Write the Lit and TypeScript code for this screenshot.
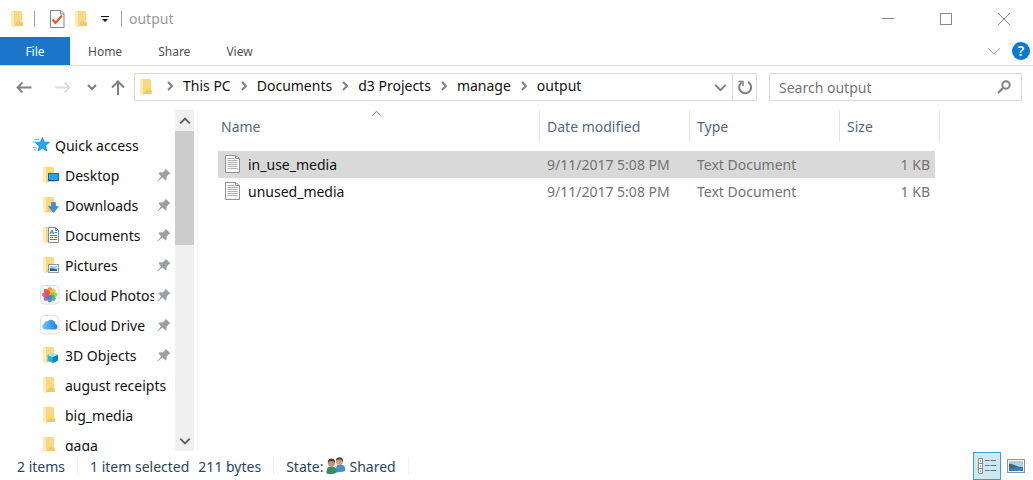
import { LitElement, html, svg, css, nothing, type TemplateResult } from "lit";
import { customElement, property, state } from "lit/decorators.js";
import { classMap } from "lit/directives/class-map.js";

type Overlay = "none" | "desktop" | "download" | "document" | "picture" | "cube";

interface Place {
  label: string;
  icon: Overlay | "photos" | "drive";
  pinned: boolean;
}

interface FileRow {
  name: string;
  modified: string;
  type: string;
  size: string;
}

const PLACES: Place[] = [
  { label: "Desktop", icon: "desktop", pinned: true },
  { label: "Downloads", icon: "download", pinned: true },
  { label: "Documents", icon: "document", pinned: true },
  { label: "Pictures", icon: "picture", pinned: true },
  { label: "iCloud Photos", icon: "photos", pinned: true },
  { label: "iCloud Drive", icon: "drive", pinned: true },
  { label: "3D Objects", icon: "cube", pinned: true },
  { label: "august receipts", icon: "none", pinned: false },
  { label: "big_media", icon: "none", pinned: false },
  { label: "gaga", icon: "none", pinned: false },
];

const FILES: FileRow[] = [
  { name: "in_use_media", modified: "9/11/2017 5:08 PM", type: "Text Document", size: "1 KB" },
  { name: "unused_media", modified: "9/11/2017 5:08 PM", type: "Text Document", size: "1 KB" },
];

const CRUMBS = ["This PC", "Documents", "d3 Projects", "manage", "output"];

const overlays: Record<Overlay, TemplateResult | typeof nothing> = {
  none: nothing,
  desktop: svg`<rect x="8.5" y="8.5" width="10" height="7" fill="#1ba5f3" stroke="#14699f"/><path d="M9 15.5h9" stroke="#0d3d66" stroke-dasharray="2 1"/>`,
  download: svg`<path d="M11.500 7.500h4v4h3L13.500 17.500 8.500 11.500h3z" fill="#3f8fd6" stroke="#2f77b8" stroke-width=".6"/>`,
  document: svg`<path d="M8.500 2.500h7l3 3v12h-10z" fill="#fff" stroke="#7d8b99"/><path d="M15.500 2.500v3h3" fill="none" stroke="#7d8b99"/><path d="M10 9l2-4 1.500 4M10.500 8h3M14.500 7.500h2.500M10 10.500h7M10 12.500h3M14.500 12.500h2.500M10 14.500h7" fill="none" stroke="#2b87cf"/>`,
  picture: svg`<rect x="8.500" y="9.500" width="10" height="8" fill="#fff" stroke="#8f99a3"/><rect x="10" y="11" width="7" height="5" fill="#9fd2f2"/><path d="M10 13l3 .5 4 1V16h-7z" fill="#28638e"/>`,
  cube: svg`<path d="M12.500 8l5.500 2v5.500L12.500 18 7.500 15.500V10z" fill="#1fb5d9"/><path d="M12.500 8l5.500 2-5.500 2.300L7.500 10z" fill="#9beaf7"/><path d="M12.500 12.300L18 10v5.500L12.500 18z" fill="#0b87b5"/>`,
};

const folder = (overlay: Overlay = "none") => html`
  <svg class="icon" width="20" height="20" viewBox="0 0 20 20" aria-hidden="true">
    <path d="M4 2h9l1 1v9.500l1 1V17H5z" fill="#f9da80" />
    <path d="M10 12l4.500 1.500V17H6z" fill="#f2c862" />
    <path d="M3 2l3.500 1.500V18.500L3 17z" fill="#fdecb5" />
    <path d="M6.500 3.500V18" stroke="#f0cf7c" stroke-width=".6" />
    ${overlays[overlay]}
  </svg>
`;

const PETALS = ["#f7941e", "#f4c51c", "#8fc63f", "#3fae77", "#3d86c6", "#8560a8", "#c94f8c", "#ea4b3b"];

const photos = () => html`
  <svg class="icon" width="20" height="20" viewBox="0 0 20 20" aria-hidden="true">
    <rect x=".5" y=".5" width="18.500" height="18.500" rx="4" fill="#fdfdfd" stroke="#dcdcdc" />
    ${PETALS.map(
      (color, i) =>
        svg`<ellipse cx="9.750" cy="5.700" rx="2.400" ry="3.600" fill=${color} fill-opacity=".88" transform="rotate(${i * 45} 9.750 9.750)"/>`,
    )}
  </svg>
`;

const drive = () => html`
  <svg class="icon" width="20" height="20" viewBox="0 0 20 20" aria-hidden="true">
    <defs>
      <linearGradient id="cloud" x1="0" x2="1"><stop stop-color="#6ec3fb" /><stop offset="1" stop-color="#1f7df0" /></linearGradient>
    </defs>
    <rect x=".5" y=".5" width="18.500" height="18.500" rx="4" fill="#fdfdfd" stroke="#dfdfdf" />
    <path d="M4.800 14.500a3 3 0 0 1-.6-5.800 2.700 2.700 0 0 1 3.300-2.200 4.300 4.300 0 0 1 7.700 2.300 2.900 2.900 0 0 1-.2 5.700z" fill="url(#cloud)" />
  </svg>
`;

const star = () => html`
  <svg class="icon" width="20" height="20" viewBox="0 0 20 20" aria-hidden="true">
    <path d="M11.500 2.500l1.800 4.700 5.200.1-4.200 3.300 1.700 5.400-4.700-2.900-4.300 2.900 1.200-5.100-3.900-3.400 5.100-.3z" fill="#29a8ef" stroke="#1583cf" stroke-width=".8" />
    <path d="M3.500 4.500h5M1.500 7h3M2 12.500h3.500M3 15h2.500" stroke="#5cb9ef" />
  </svg>
`;

const pin = () => html`
  <svg class="pin" width="14" height="14" viewBox="0 0 14 14" aria-hidden="true">
    <path d="M8.500.5l5 5-1.500.5-2.500 2.700.2 2.600-1.200 1.200-3-3L1 13.300l-.5-.5L4.300 8.500 1.500 5.500l1.200-1.200 3 .2 2.600-2.400z" fill="#9aa0a5" />
  </svg>
`;

const chevron = (dir: "right" | "down" | "up", size = 10, weight = 2) => {
  const d = { right: "M3 1l4 4-4 4", down: "M1 3l4 4 4-4", up: "M1 7l4-4 4 4" }[dir];
  return html`<svg width=${size} height=${size} viewBox="0 0 10 10" aria-hidden="true">
    <path d=${d} fill="none" stroke="currentColor" stroke-width=${(weight * 10) / size} />
  </svg>`;
};

const textFile = () => html`
  <svg class="file" width="16" height="19" viewBox="0 0 16 19" aria-hidden="true">
    <path d="M.5.5h10l4 3v14h-14z" fill="#fafafa" stroke="#929292" />
    <path d="M10.500.5v3h4" fill="none" stroke="#929292" />
    <path d="M2.500 3.500h7M2.500 5.500h10M2.500 7.500h10M2.500 9.500h10M2.500 11.500h10M2.500 13.500h10" stroke="#b0b0b0" />
  </svg>
`;

const BASE = css`
  :host {
    display: block;
    box-sizing: border-box;
  }
  *,
  *::before {
    box-sizing: border-box;
  }
  button,
  input {
    font: inherit;
    color: inherit;
    background: none;
    border: 0;
    margin: 0;
    padding: 0;
  }
  button {
    display: flex;
    align-items: center;
    justify-content: center;
  }
  a {
    color: inherit;
    text-decoration: none;
  }
  svg {
    display: block;
    flex: none;
  }
`;

@customElement("title-bar")
class TitleBar extends LitElement {
  static styles = [
    BASE,
    css`
      .bar {
        display: flex;
        align-items: center;
        height: 37px;
        padding-left: 8px;
      }
      .divider {
        width: 1px;
        height: 16px;
        background: #a0a0a0;
      }
      .divider.first {
        margin: 0 13px 0 6px;
      }
      .tools {
        display: flex;
        align-items: center;
        gap: 6px;
      }
      .more {
        width: 14px;
        height: 20px;
      }
      .divider.last {
        margin: 0 7px 0 9px;
      }
      .title {
        flex: 1;
        margin: 0;
        font-size: 14px;
        font-weight: 400;
        color: #9a9a9a;
      }
      .window {
        display: flex;
        color: #8a8a8a;
      }
      .window button {
        width: 58px;
        height: 36px;
      }
    `,
  ];

  render() {
    return html`
      <header class="bar">
        ${folder()}
        <span class="divider first"></span>
        <div class="tools">
          <button aria-label="Properties">
            <svg width="18" height="20" viewBox="0 0 18 20">
              <path d="M2.500 1.500h10.500l3 3v14h-13.500z" fill="#fff" stroke="#858585" />
              <path d="M12.500 1.500v3.500h3.500" fill="none" stroke="#858585" />
              <path d="M4.500 10.500l3 3.500 6.500-7.500" fill="none" stroke="#e2571b" stroke-width="2" />
            </svg>
          </button>
          <button aria-label="New folder">${folder()}</button>
          <button class="more" aria-label="Customize Quick Access Toolbar">
            <svg width="8" height="8" viewBox="0 0 8 8">
              <path d="M0 1.500h8" stroke="#111" />
              <path d="M1 4h6L4 7z" fill="#111" />
            </svg>
          </button>
        </div>
        <span class="divider last"></span>
        <h1 class="title">output</h1>
        <div class="window">
          <button aria-label="Minimize">
            <svg width="12" height="12" viewBox="0 0 12 12"><path d="M0 5.500h12" stroke="currentColor" /></svg>
          </button>
          <button aria-label="Maximize">
            <svg width="12" height="12" viewBox="0 0 12 12">
              <rect x=".5" y=".5" width="11" height="11" fill="none" stroke="currentColor" />
            </svg>
          </button>
          <button aria-label="Close">
            <svg width="12" height="12" viewBox="0 0 12 12"><path d="M0 0l12 12M12 0L0 12" stroke="currentColor" /></svg>
          </button>
        </div>
      </header>
    `;
  }
}

@customElement("ribbon-tabs")
class RibbonTabs extends LitElement {
  static styles = [
    BASE,
    css`
      .tabs {
        display: flex;
        height: 29px;
        border-bottom: 1px solid #d9dadb;
        font-size: 12px;
        color: #505050;
      }
      .tab {
        padding: 0 18px;
      }
      .tab.file {
        width: 70px;
        background: #1976c8;
        color: #fff;
      }
      .right {
        display: flex;
        align-items: center;
        gap: 11px;
        margin-left: auto;
        padding-right: 3px;
        color: #9a9a9a;
      }
      .help {
        width: 18px;
        height: 18px;
        border-radius: 50%;
        background: #0b78d4;
        color: #fff;
        font-size: 14px;
        font-weight: 600;
        line-height: 18px;
      }
    `,
  ];

  render() {
    return html`
      <nav class="tabs">
        <button class="tab file">File</button>
        ${["Home", "Share", "View"].map((t) => html`<button class="tab">${t}</button>`)}
        <div class="right">
          <button aria-label="Expand the ribbon">${chevron("down", 14, 1)}</button>
          <button class="help" aria-label="Help">?</button>
        </div>
      </nav>
    `;
  }
}

@customElement("address-bar")
class AddressBar extends LitElement {
  static styles = [
    BASE,
    css`
      .row {
        display: flex;
        align-items: center;
        padding: 7px 11px 9px 14px;
        font-size: 14px;
        color: #808080;
      }
      .arrow {
        width: 20px;
        height: 28px;
      }
      .forward {
        margin-left: 19px;
        color: #dcdcdc;
      }
      .recent {
        width: 20px;
        height: 28px;
        margin-left: 9px;
      }
      .up {
        margin: 0 6px;
      }
      .box {
        display: flex;
        align-items: center;
        height: 28px;
        border: 1px solid #d9d9d9;
      }
      .path {
        flex: 1;
        min-width: 0;
      }
      .path .icon {
        margin-left: 2px;
      }
      .crumbs {
        display: flex;
        flex: 1;
        min-width: 0;
        overflow: hidden;
        margin: 0;
        padding: 0;
        list-style: none;
      }
      .crumb {
        display: flex;
        align-items: center;
        white-space: nowrap;
        line-height: 18px;
        padding-bottom: 2px;
      }
      .crumb svg {
        margin: 0 8px;
      }
      .crumb a {
        color: #111;
      }
      .history {
        width: 24px;
        height: 26px;
      }
      .refresh {
        width: 24px;
        height: 26px;
        border-left: 1px solid #d9d9d9;
      }
      .search {
        width: 253px;
        margin-left: 12px;
        padding: 0 10px 0 9px;
      }
      .search input {
        flex: 1;
        min-width: 0;
        outline: 0;
      }
      .search input::placeholder {
        color: #757575;
        opacity: 1;
      }
    `,
  ];

  render() {
    return html`
      <div class="row">
        <button class="arrow" aria-label="Back">
          <svg width="16" height="14" viewBox="0 0 16 14">
            <path d="M15.500 7.500H1.500M6.500 2.500L1.500 7.500l5 5" fill="none" stroke="currentColor" stroke-width="1.800" />
          </svg>
        </button>
        <button class="arrow forward" aria-label="Forward" disabled>
          <svg width="16" height="14" viewBox="0 0 16 14">
            <path d="M.5 7.500h14M9.500 2.500l5 5-5 5" fill="none" stroke="currentColor" stroke-width="1.800" />
          </svg>
        </button>
        <button class="recent" aria-label="Recent locations">${chevron("down", 10, 2)}</button>
        <button class="arrow up" aria-label="Up">
          <svg width="14" height="16" viewBox="0 0 14 16">
            <path d="M7 16V2.500M1 8.500l6-6 6 6" fill="none" stroke="currentColor" stroke-width="2" />
          </svg>
        </button>
        <div class="box path">
          ${folder()}
          <ol class="crumbs">
            ${CRUMBS.map((c) => html`<li class="crumb">${chevron("right", 10, 2)}<a href="#">${c}</a></li>`)}
          </ol>
          <button class="history" aria-label="Previous locations">${chevron("down", 13, 2)}</button>
          <button class="refresh" aria-label="Refresh">
            <svg width="16" height="16" viewBox="0 0 16 16">
              <path d="M4.500 3.500A6 6 0 1 0 11 3" fill="none" stroke="currentColor" stroke-width="2" />
              <path d="M1.500 2.500h4.500v4.500" fill="none" stroke="currentColor" stroke-width="1.500" />
            </svg>
          </button>
        </div>
        <label class="box search">
          <input type="text" placeholder="Search output" aria-label="Search output" />
          <svg width="14" height="14" viewBox="0 0 14 14" aria-hidden="true">
            <circle cx="9" cy="5" r="3.700" fill="none" stroke="currentColor" stroke-width="2" />
            <path d="M6.200 7.800L1 13" stroke="currentColor" stroke-width="2.200" />
          </svg>
        </label>
      </div>
    `;
  }
}

@customElement("nav-pane")
class NavPane extends LitElement {
  static styles = [
    BASE,
    css`
      :host {
        display: flex;
        min-height: 0;
        width: 198px;
        padding-right: 3px;
        border-right: 1px solid #f5f5f5;
      }
      .list {
        flex: 1;
        min-width: 0;
        overflow: hidden;
        margin: 0;
        padding: 20px 0 0;
        list-style: none;
        font-size: 14px;
        color: #111;
      }
      .place {
        display: flex;
        align-items: center;
        height: 30px;
        padding: 0 4px 0 40px;
      }
      .place.root {
        padding-left: 31px;
      }
      .label {
        flex: 1;
        min-width: 0;
        overflow: hidden;
        margin-left: 5px;
        white-space: nowrap;
      }
      .root .label {
        margin-left: 4px;
      }
      .pin {
        margin-left: 3px;
      }
      .scroll {
        display: flex;
        flex-direction: column;
        width: 19px;
        background: #f0f0f0;
        color: #606060;
      }
      .step {
        height: 21px;
        flex: none;
      }
      .track {
        flex: 1;
      }
      .thumb {
        height: 38%;
        background: #cdcdcd;
      }
    `,
  ];

  render() {
    const iconOf = (p: Place) => (p.icon === "photos" ? photos() : p.icon === "drive" ? drive() : folder(p.icon));
    return html`
      <ul class="list">
        <li><a class="place root" href="#">${star()}<span class="label">Quick access</span></a></li>
        ${PLACES.map(
          (p) => html`<li>
            <a class="place" href="#">${iconOf(p)}<span class="label">${p.label}</span>${p.pinned ? pin() : nothing}</a>
          </li>`,
        )}
      </ul>
      <div class="scroll">
        <button class="step" aria-label="Scroll up">${chevron("up", 12, 2)}</button>
        <div class="track"><div class="thumb"></div></div>
        <button class="step" aria-label="Scroll down">${chevron("down", 12, 2)}</button>
      </div>
    `;
  }
}

@customElement("file-list")
class FileList extends LitElement {
  @property({ type: Number }) selected = 0;

  static styles = [
    BASE,
    css`
      :host {
        padding-left: 20px;
        overflow: hidden;
      }
      .files {
        width: 722px;
        table-layout: fixed;
        border-collapse: collapse;
        font-size: 14px;
        color: #737373;
      }
      .name {
        width: 322px;
      }
      .medium {
        width: 150px;
      }
      th {
        height: 41px;
        padding: 0;
        vertical-align: top;
        font-weight: 400;
      }
      .head {
        position: relative;
        justify-content: flex-start;
        width: 100%;
        height: 32px;
        padding-left: 7px;
        border-right: 1px solid #e6e6e6;
        color: #54687f;
      }
      .name .head {
        padding-left: 3px;
      }
      .sort {
        position: absolute;
        top: -2px;
        left: 0;
        right: 4px;
        display: flex;
        justify-content: center;
        color: #777;
      }
      td {
        height: 27px;
        padding: 0 0 0 7px;
        white-space: nowrap;
      }
      td.title {
        color: #111;
      }
      .entry {
        display: flex;
        align-items: center;
        gap: 7px;
      }
      .selected td {
        background: #d9d9d9;
      }
      td.size {
        padding-right: 10px;
        text-align: right;
      }
      .selected td.size {
        background: linear-gradient(#d9d9d9, #d9d9d9) no-repeat;
        background-size: calc(100% - 5px) 100%;
      }
    `,
  ];

  render() {
    return html`
      <table class="files">
        <thead>
          <tr>
            <th class="name" aria-sort="ascending">
              <button class="head">Name<span class="sort">${chevron("up", 11, 1)}</span></button>
            </th>
            <th class="medium"><button class="head">Date modified</button></th>
            <th class="medium"><button class="head">Type</button></th>
            <th><button class="head">Size</button></th>
          </tr>
        </thead>
        <tbody>
          ${FILES.map(
            (f, i) => html`<tr class=${classMap({ selected: i === this.selected })}>
              <td class="title"><span class="entry">${textFile()}${f.name}</span></td>
              <td>${f.modified}</td>
              <td>${f.type}</td>
              <td class="size">${f.size}</td>
            </tr>`,
          )}
        </tbody>
      </table>
    `;
  }
}

@customElement("status-bar")
class StatusBar extends LitElement {
  static styles = [
    BASE,
    css`
      .bar {
        display: flex;
        align-items: center;
        height: 29px;
        padding: 1px 7px 0 17px;
        font-size: 14px;
        color: #2a4465;
        white-space: nowrap;
      }
      .part {
        display: flex;
        align-items: center;
        gap: 9px;
        height: 18px;
        margin-right: 12px;
        padding-right: 12px;
        border-right: 1px solid #f0f0f0;
      }
      .state {
        gap: 3px;
      }
      .views {
        display: flex;
        align-items: center;
        gap: 5px;
        margin-left: auto;
      }
      .view {
        width: 20px;
        height: 28px;
      }
      .view.active {
        width: 28px;
        background: #cde8f3;
        border: 1px solid #3d9fc4;
      }
    `,
  ];

  render() {
    return html`
      <footer class="bar">
        <span class="part">2 items</span>
        <span class="part"><span>1 item selected</span><span>211 bytes</span></span>
        <span class="part state">
          State:
          <svg width="20" height="18" viewBox="0 0 20 18" aria-hidden="true">
            <path d="M10 15c-.5-5 .5-7.500 4.500-7.500s5 3 4.500 6.500c-2 1-6 1.500-9 1z" fill="#4a90c8" />
            <circle cx="13.500" cy="4.500" r="3.500" fill="#c9a283" />
            <path d="M9.800 4C9.500 1.200 11.500 0 13.800.2s3.800 1.800 3.200 4.600c-1-1.500-2.500-2.300-4-2.300s-2.200.5-3.200 1.500z" fill="#54473e" />
            <path d="M.5 16.500c-.3-4.500 1-7 5-7s5.500 2.500 5 6.500c-3 1.300-7 1.500-10 .5z" fill="#3d8a68" />
            <circle cx="5.500" cy="6" r="3.500" fill="#c09272" />
            <path d="M1.800 6C1.500 3 3.200 1.500 5.500 1.500s4 1.500 3.600 4.500C8 4.500 6.500 4 5 4s-2.200.8-3.200 2z" fill="#4b3e36" />
          </svg>
          Shared
        </span>
        <div class="views">
          <button class="view active" aria-label="Details view">
            <svg width="18" height="16" viewBox="0 0 18 16">
              <path d="M.5.500h4v15h-4zM.5 5.500h4M.5 10.500h4" fill="#fff" stroke="#8a8a8a" />
              <path d="M2 3h1M2 8h1M2 13h1" stroke="#a0522d" />
              <path d="M7 2.500h4.500M12.500 2.500H18M7 7.500h4.500M12.500 7.500H18M7 12.500h4.500M12.500 12.500H18" stroke="#5f7480" />
            </svg>
          </button>
          <button class="view" aria-label="Large icons view">
            <svg width="18" height="14" viewBox="0 0 18 14">
              <rect x=".5" y=".5" width="17" height="13" fill="#fff" stroke="#8e9499" />
              <rect x="2" y="2" width="14" height="10" fill="#a6d2f0" />
              <path d="M2 5c4-1 6 3 14 3v2H2z" fill="#3b6a70" />
              <path d="M2 9.500c5-1.500 9-1 14-1V12H2z" fill="#3a7fc0" />
            </svg>
          </button>
        </div>
      </footer>
    `;
  }
}

@customElement("app-root")
class AppRoot extends LitElement {
  @state() private selected = 0;

  static styles = [
    BASE,
    css`
      :host {
        display: flex;
        flex-direction: column;
        height: 100vh;
        overflow: hidden;
        background: #fff;
        font-family: "Noto Sans", "Open Sans", sans-serif;
      }
      .content {
        display: grid;
        grid-template-columns: auto 1fr;
        flex: 1;
        min-height: 0;
      }
    `,
  ];

  render() {
    return html`
      <title-bar></title-bar>
      <ribbon-tabs></ribbon-tabs>
      <address-bar></address-bar>
      <main class="content">
        <nav-pane></nav-pane>
        <file-list .selected=${this.selected}></file-list>
      </main>
      <status-bar></status-bar>
    `;
  }
}
